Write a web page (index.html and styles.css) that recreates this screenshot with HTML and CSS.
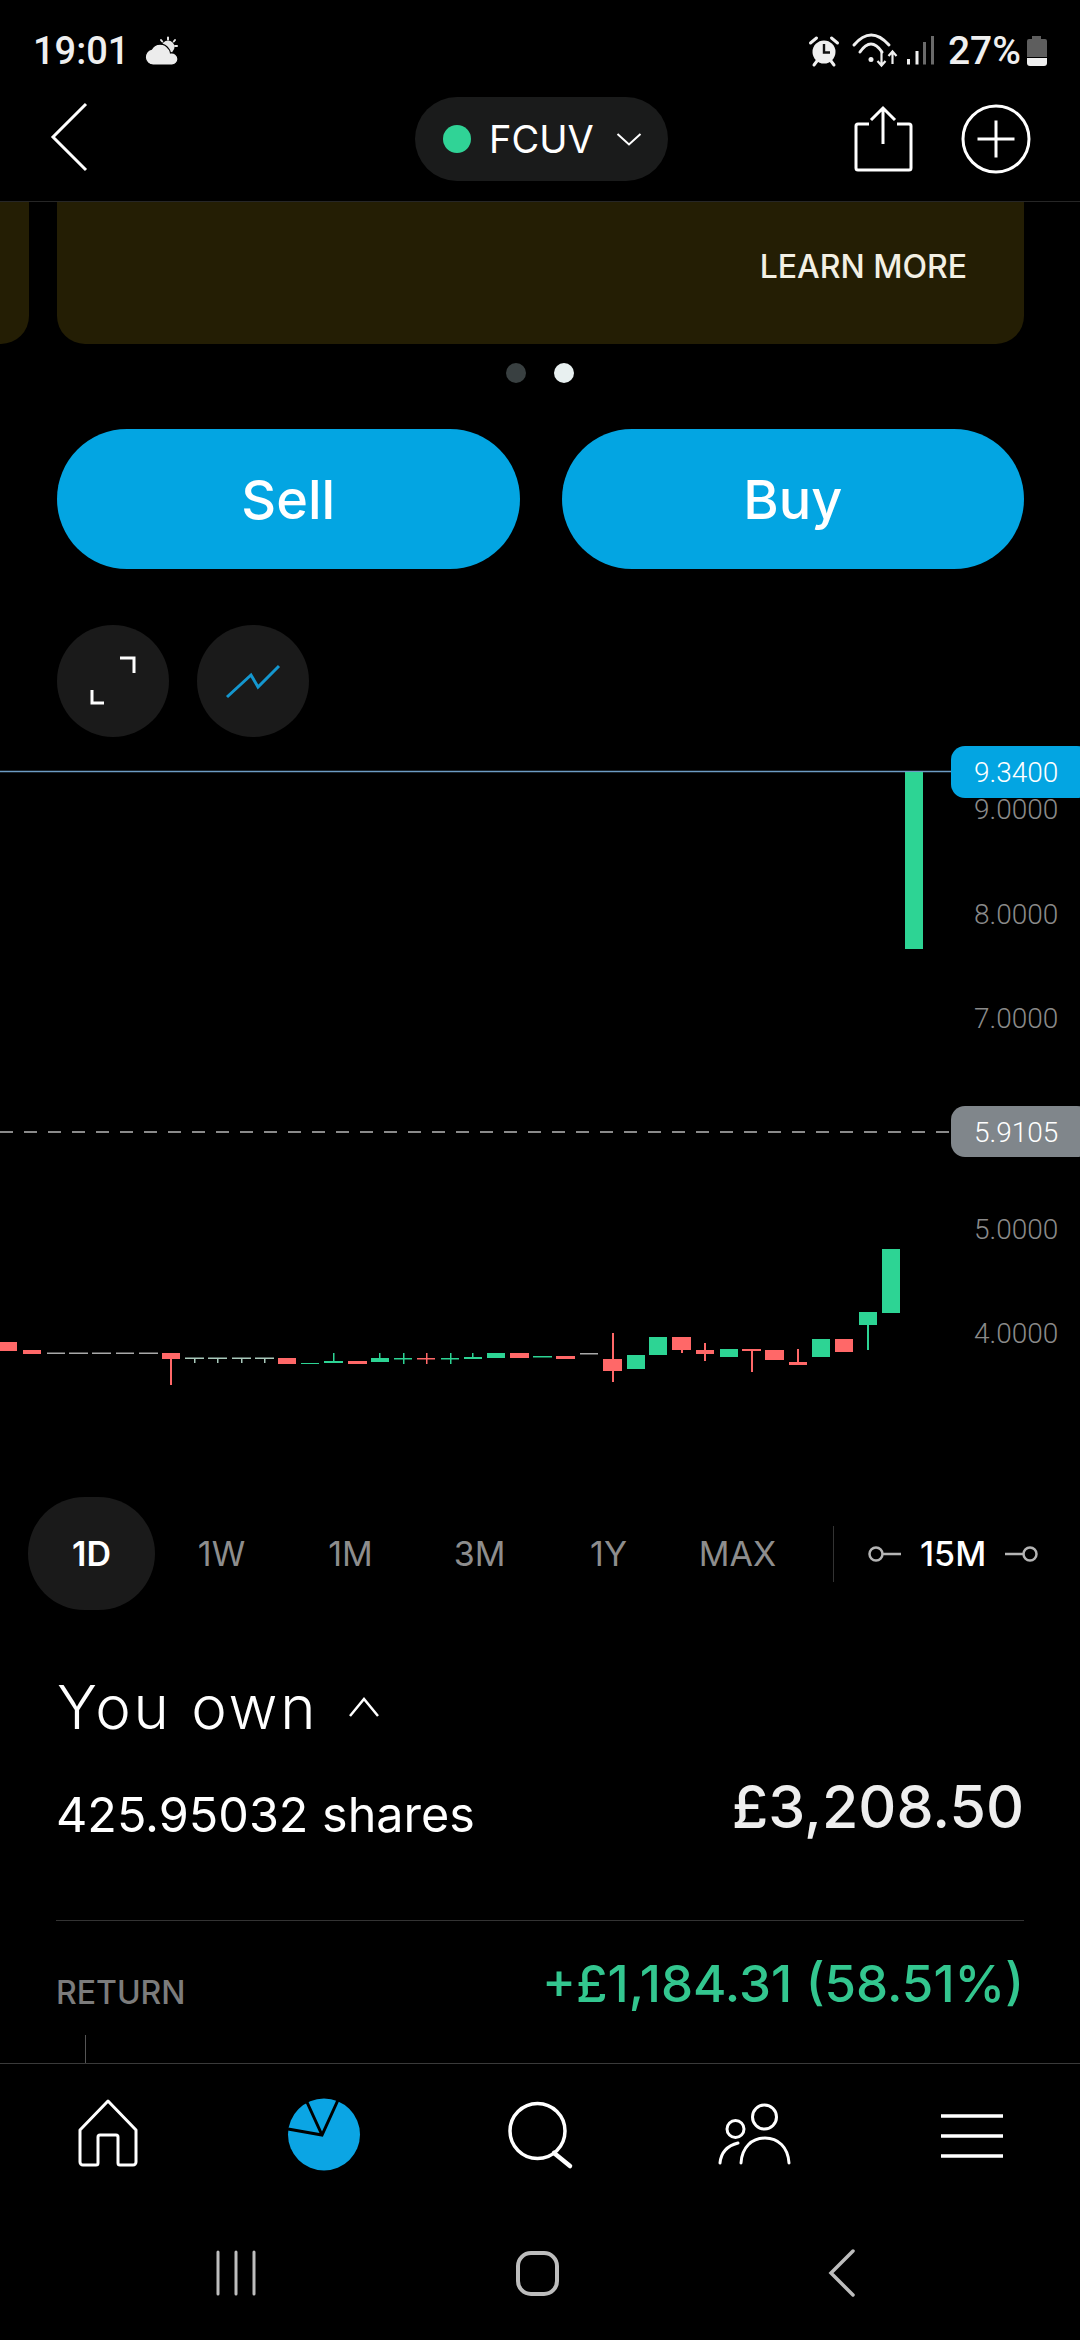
FILE: index.html
```html
<!DOCTYPE html>
<html lang="en">
<head>
<meta charset="utf-8">
<title>FCUV</title>
<link rel="stylesheet" href="styles.css">
</head>
<body>
<div class="phone">
  <div class="status-bar">
    <div class="status-left">
      <span class="clock">19:01</span>
      <svg class="ico-weather" viewBox="143 36 40 32" width="40" height="32">
        <circle cx="168" cy="48" r="6.5" fill="#e8e8e8"/>
        <g stroke="#e8e8e8" stroke-width="2" stroke-linecap="round">
          <path d="M168 38.5v2M161 41l1.2 1.5M175 41l-1.2 1.5M177 47h-2"/>
        </g>
        <path d="M153 66a8 8 0 0 1-1.500-15.800 10 10 0 0 1 17-.5 7 7 0 0 1 2 4.300 6.300 6.300 0 0 1 7.500 6 6.200 6.200 0 0 1-6 6z" fill="#ececec" stroke="#000" stroke-width="1.200"/>
      </svg>
    </div>
    <div class="status-right">
      <svg class="ico-tray" viewBox="808 34 128 36" width="128" height="36">
        <circle cx="824" cy="53" r="11.5" fill="#efefef"/>
        <path d="M824 45v8.500h6" fill="none" stroke="#111" stroke-width="2.400"/>
        <path d="M810.500 44l6-5M837.500 44l-6-5M814 66l3-4M834 66l-3-4" stroke="#efefef" stroke-width="3" stroke-linecap="round"/>
        <g fill="none" stroke="#efefef" stroke-width="3" stroke-linecap="round">
          <path d="M854 46Q871 26 889 46"/>
          <path d="M860 53Q871 37 882 53"/>
        </g>
        <circle cx="871" cy="60.500" r="2.500" fill="#efefef"/>
        <g fill="none" stroke="#efefef" stroke-width="2.200">
          <path d="M881.500 53v13M877.500 62l4 4.500 4-4.500"/>
          <path d="M892.500 65v-12M888.500 57l4-4.500 4 4.500"/>
        </g>
        <rect x="907" y="60" width="3" height="5.500" fill="#efefef"/>
        <rect x="915.500" y="52" width="3" height="13.500" fill="#efefef"/>
        <rect x="923" y="43" width="3" height="22.500" fill="#6a6a6a"/>
        <rect x="931" y="37" width="3" height="28.500" fill="#6a6a6a"/>
      </svg>
      <span class="battery-pct">27%</span>
      <svg class="ico-battery" viewBox="1027 36 22 32" width="22" height="32">
        <path d="M1033 37h9v3h4a2 2 0 0 1 2 2v16h-20V42a2 2 0 0 1 2-2h3z" fill="#5e5e5e"/>
        <path d="M1028 59h20v5a3 3 0 0 1-3 3h-14a3 3 0 0 1-3-3z" fill="#efefef"/>
      </svg>
    </div>
  </div>

  <header class="app-header">
    <svg class="ico-back" viewBox="40 97 60 104" width="60" height="104">
      <path d="M86 104L53 137l33 33" fill="none" stroke="#fff" stroke-width="3"/>
    </svg>
    <div class="ticker-pill">
      <span class="ticker-dot"></span>
      <span class="ticker-name">FCUV</span>
      <svg class="ico-chev" viewBox="0 0 26 14" width="26" height="14">
        <path d="M1.500 2l11.500 10.500L24.500 2" fill="none" stroke="#fff" stroke-width="2"/>
      </svg>
    </div>
    <div class="header-actions">
      <svg viewBox="850 97 66 104" width="66" height="104">
        <path d="M869 124h-11a2 2 0 0 0-2 2v42a2 2 0 0 0 2 2h51a2 2 0 0 0 2-2v-42a2 2 0 0 0-2-2h-12" fill="none" stroke="#fff" stroke-width="3"/>
        <path d="M883 144v-36M871 120l12-12 12 12" fill="none" stroke="#fff" stroke-width="3"/>
      </svg>
      <svg viewBox="960 97 72 104" width="72" height="104">
        <circle cx="996" cy="139" r="33" fill="none" stroke="#fff" stroke-width="3"/>
        <path d="M996 120.500v37M977.500 139h37" stroke="#fff" stroke-width="3"/>
      </svg>
    </div>
  </header>

  <main class="content">
    <div class="carousel">
      <div class="promo promo-prev"></div>
      <div class="promo promo-main"><span class="learn-more">LEARN MORE</span></div>
    </div>
    <div class="dots"><span class="dot"></span><span class="dot dot-on"></span></div>

    <div class="trade-row">
      <button class="trade-btn">Sell</button>
      <button class="trade-btn">Buy</button>
    </div>

    <div class="tool-row">
      <span class="tool-btn">
        <svg viewBox="0 0 112 112" width="112" height="112" fill="none" stroke="#fff" stroke-width="3">
          <path d="M63 33h14v15"/><path d="M35 65v13h12"/>
        </svg>
      </span>
      <span class="tool-btn">
        <svg viewBox="0 0 112 112" width="112" height="112" fill="none" stroke="#1497cf" stroke-width="3">
          <path d="M30 72L54 50 61 62 82 41"/>
        </svg>
      </span>
    </div>

    <div class="chart">
      <svg viewBox="0 737 1080 760" width="1080" height="760">
        <line x1="0" x2="951" y1="771.500" y2="771.500" stroke="#6d9cc4" stroke-width="1.500"/>
        <line x1="0" x2="951" y1="1132" y2="1132" stroke="#b8b8b8" stroke-width="1.500" stroke-dasharray="13 11"/>

        <g fill="#2dd494">
          <rect x="905" y="772" width="18" height="177"/>
          <rect x="882" y="1249" width="18" height="64"/>
          <rect x="859" y="1312" width="18" height="13"/>
          <rect x="867" y="1325" width="2" height="25"/>
          <rect x="812" y="1339" width="18" height="18"/>
          <rect x="720" y="1349" width="18" height="8"/>
          <rect x="649" y="1337" width="18" height="18"/>
          <rect x="627" y="1355" width="18" height="14"/>
          <rect x="533" y="1356" width="19" height="1.500"/>
          <rect x="487" y="1353" width="18" height="5"/>
          <rect x="464" y="1357" width="18" height="2"/>
          <rect x="472" y="1353" width="1.500" height="5"/>
          <rect x="371" y="1358" width="18" height="4"/>
          <rect x="379" y="1353" width="1.500" height="6"/>
          <rect x="324" y="1361" width="19" height="2"/>
          <rect x="333" y="1353" width="1.500" height="9"/>
          <rect x="301" y="1363" width="18" height="1"/>
          <rect x="394" y="1358" width="18" height="1.500"/>
          <rect x="403" y="1353" width="1.500" height="11"/>
          <rect x="441" y="1358" width="18" height="1.500"/>
          <rect x="450" y="1353" width="1.500" height="11"/>
        </g>
        <g fill="#a9c9bb">
          <rect x="185" y="1357.500" width="19" height="1.500"/><rect x="194" y="1358" width="1.500" height="5"/>
          <rect x="208" y="1357.500" width="19" height="1.500"/><rect x="217" y="1358" width="1.500" height="5"/>
          <rect x="232" y="1357.500" width="19" height="1.500"/><rect x="241" y="1358" width="1.500" height="5"/>
          <rect x="255" y="1357.500" width="19" height="1.500"/><rect x="264" y="1358" width="1.500" height="5"/>
        </g>
        <g fill="#a8a8a8">
          <rect x="47" y="1352.500" width="18" height="1.500"/>
          <rect x="69" y="1352.500" width="19" height="1.500"/>
          <rect x="92" y="1352.500" width="19" height="1.500"/>
          <rect x="116" y="1352.500" width="18" height="1.500"/>
          <rect x="139" y="1352.500" width="19" height="1.500"/>
          <rect x="580" y="1353" width="18" height="1.500"/>
        </g>
        <g fill="#ff6868">
          <rect x="0" y="1342" width="17" height="9"/>
          <rect x="23" y="1350" width="18" height="4"/>
          <rect x="162" y="1353" width="18" height="6"/>
          <rect x="170" y="1359" width="2" height="26"/>
          <rect x="278" y="1358" width="18" height="6"/>
          <rect x="348" y="1361" width="19" height="3"/>
          <rect x="417" y="1358" width="18" height="1.500"/>
          <rect x="426" y="1353" width="1.500" height="11"/>
          <rect x="510" y="1353" width="19" height="5"/>
          <rect x="556" y="1356" width="19" height="3"/>
          <rect x="603" y="1359" width="19" height="12"/>
          <rect x="612" y="1333" width="2" height="49"/>
          <rect x="672" y="1337" width="19" height="13"/>
          <rect x="681" y="1350" width="2" height="3"/>
          <rect x="696" y="1350" width="18" height="4"/>
          <rect x="704" y="1343" width="2" height="18"/>
          <rect x="742" y="1349" width="19" height="2"/>
          <rect x="751" y="1350" width="2" height="22"/>
          <rect x="765" y="1350" width="19" height="10"/>
          <rect x="789" y="1362" width="18" height="3"/>
          <rect x="797" y="1349" width="2" height="14"/>
          <rect x="835" y="1339" width="18" height="13"/>
        </g>

        <rect class="price-tag-live" x="951" y="746" width="140" height="52" rx="14"/>
        <rect class="price-tag-prev" x="951" y="1106" width="140" height="51" rx="14"/>
        <text class="axis axis-on" x="974" y="782">9.3400</text>
        <text class="axis" x="974" y="819">9.0000</text>
        <text class="axis" x="974" y="924">8.0000</text>
        <text class="axis" x="974" y="1028">7.0000</text>
        <text class="axis axis-on" x="974" y="1142">5.9105</text>
        <text class="axis" x="974" y="1239">5.0000</text>
        <text class="axis" x="974" y="1343">4.0000</text>
      </svg>
    </div>

    <div class="ranges">
      <span class="range range-on">1D</span>
      <span class="range">1W</span>
      <span class="range">1M</span>
      <span class="range">3M</span>
      <span class="range">1Y</span>
      <span class="range">MAX</span>
      <span class="range-sep"></span>
      <div class="interval">
        <svg viewBox="0 0 34 16" width="34" height="16" fill="none" stroke="#b4b4b4" stroke-width="2.500"><circle cx="8" cy="8" r="6.500"/><path d="M15 8h18"/></svg>
        <span class="interval-label">15M</span>
        <svg viewBox="0 0 34 16" width="34" height="16" fill="none" stroke="#b4b4b4" stroke-width="2.500"><path d="M1 8h18"/><circle cx="26" cy="8" r="6.500"/></svg>
      </div>
    </div>

    <section class="holding">
      <div class="own-title">
        <h2>You own</h2>
        <svg viewBox="0 0 30 20" width="30" height="20"><path d="M1 19L15 2l14 17" fill="none" stroke="#fff" stroke-width="2.500"/></svg>
      </div>
      <div class="own-row">
        <span class="shares">425.95032 shares</span>
        <span class="value">£3,208.50</span>
      </div>
      <div class="return-row">
        <span class="return-label">RETURN</span>
        <span class="return-value">+£1,184.31 (58.51%)</span>
      </div>
      <div class="timeline-stub"></div>
    </section>
  </main>

  <nav class="tab-bar">
    <svg viewBox="0 2064 216 126" width="216" height="126" fill="none" stroke="#fff" stroke-width="3" stroke-linejoin="round">
      <path d="M108 2101L136 2130v32a3 3 0 0 1-3 3h-13a2 2 0 0 1-2-2v-26a2 2 0 0 0-2-2h-16a2 2 0 0 0-2 2v26a2 2 0 0 1-2 2H83a3 3 0 0 1-3-3v-32z"/>
    </svg>
    <svg viewBox="216 2064 216 126" width="216" height="126">
      <circle cx="324" cy="2134.500" r="36" fill="#0ba5e4"/>
      <path d="M288 2129l34 6 16-35M306 2100l16 35" fill="none" stroke="#000" stroke-width="3"/>
    </svg>
    <svg viewBox="432 2064 216 126" width="216" height="126" fill="none" stroke="#fff" stroke-width="3.500">
      <circle cx="537.500" cy="2131" r="27.500"/>
      <path d="M554 2153l16 13" stroke-linecap="round" stroke-width="4.500"/>
    </svg>
    <svg viewBox="648 2064 216 126" width="216" height="126" fill="none" stroke="#fff" stroke-width="3">
      <circle cx="764.500" cy="2117" r="12"/>
      <circle cx="735.500" cy="2129" r="8.500"/>
      <path d="M741 2163c1-16 11-25 24-25s23 9 24 25" stroke-linecap="round"/>
      <path d="M720 2163c1-10 6-17 18-20" stroke-linecap="round"/>
    </svg>
    <svg viewBox="864 2064 216 126" width="216" height="126" stroke="#fff" stroke-width="3.500">
      <path d="M941 2116h62M941 2136h62M941 2156h62"/>
    </svg>
  </nav>
  <div class="system-nav">
    <svg viewBox="85 2223 302 100" width="302" height="100" stroke="#bdbdbd" stroke-width="3" stroke-linecap="round">
      <path d="M218 2252v42M236 2252v42M254 2252v42"/>
    </svg>
    <svg viewBox="387 2223 302 100" width="302" height="100" fill="none">
      <rect x="518" y="2253" width="39" height="41" rx="13" stroke="#bdbdbd" stroke-width="4"/>
    </svg>
    <svg viewBox="689 2223 302 100" width="302" height="100" fill="none">
      <path d="M853 2251l-22 22 22 22" stroke="#bdbdbd" stroke-width="3.500" stroke-linecap="round"/>
    </svg>
  </div>
</div>
</body>
</html>
```
FILE: styles.css
```css
* { box-sizing: border-box; }
html, body { margin: 0; padding: 0; background: #000; }
body { width: 1080px; height: 2340px; overflow: hidden; }
svg { display: block; }

.phone {
  width: 1080px;
  height: 2340px;
  display: flex;
  flex-direction: column;
  color: #fff;
  font-family: "Inter", "Liberation Sans", sans-serif;
  background: #000;
}

.status-bar {
  height: 97px;
  flex: none;
  display: flex;
  justify-content: space-between;
  align-items: flex-start;
  padding: 30px 32px 0 33px;
  font-family: "Roboto", sans-serif;
  font-weight: 500;
  color: #efefef;
}
.status-left, .status-right { display: flex; align-items: center; height: 42px; }
.clock { font-size: 38px; line-height: 42px; }
.ico-weather { margin-left: 14px; }
.battery-pct { font-size: 39px; line-height: 42px; margin-left: 12px; }
.ico-battery { margin-left: 5px; }

.app-header {
  height: 105px;
  flex: none;
  display: grid;
  grid-template-columns: 1fr auto 1fr;
  border-bottom: 1px solid #262626;
  padding-left: 40px;
}
.ticker-pill {
  height: 84px;
  width: 253px;
  border-radius: 42px;
  background: #1a1b1b;
  display: flex;
  align-items: center;
  padding-left: 28px;
  margin-right: 37px;
}
.ticker-dot { width: 28px; height: 28px; border-radius: 50%; background: #30d396; }
.ticker-name { font-size: 38px; margin-left: 18px; font-weight: 400; }
.ico-chev { margin-left: 22px; }
.header-actions { display: flex; justify-content: flex-end; padding-right: 48px; gap: 44px; }

.content { flex: 1; min-height: 0; overflow: hidden; }

.carousel { display: flex; gap: 28px; height: 142px; }
.promo { background: #241e04; border-radius: 0 0 28px 28px; }
.promo-prev { width: 29px; border-bottom-left-radius: 0; }
.promo-main {
  width: 967px;
  display: flex;
  justify-content: flex-end;
  padding: 45px 57px 0 0;
}
.learn-more { font-size: 32px; line-height: 40px; font-weight: 500; color: #f3f0e4; }

.dots { display: flex; justify-content: center; gap: 28px; margin-top: 19px; }
.dot { width: 20px; height: 20px; border-radius: 50%; background: #394041; }
.dot-on { background: #e8f0f0; }

.trade-row { display: flex; gap: 42px; padding: 0 56px 0 57px; margin-top: 46px; }
.trade-btn {
  flex: 1;
  height: 140px;
  border: 0;
  border-radius: 70px;
  background: #03a5e2;
  color: #fff;
  font-family: inherit;
  font-size: 54px;
  font-weight: 500;
  padding: 0;
}

.tool-row { display: flex; gap: 28px; padding-left: 57px; margin-top: 56px; }
.tool-btn { width: 112px; height: 112px; border-radius: 50%; background: #1a1a1a; }

.chart { height: 760px; }
.price-tag-live { fill: #03a5e2; }
.price-tag-prev { fill: #80868b; }
.axis { font-family: "Roboto", sans-serif; font-weight: 300; font-size: 28px; fill: #8a8a8a; }
.axis-on { fill: #fff; }

.ranges { height: 113px; display: flex; align-items: center; padding-left: 28px; }
.range {
  width: 129px;
  height: 113px;
  border-radius: 57px;
  display: flex;
  align-items: center;
  justify-content: center;
  font-size: 34px;
  color: #8d8d8d;
  flex: none;
}
.range-on { background: #1a1a1a; color: #fff; font-weight: 600; width: 127px; margin-right: 2px; }
.range-sep { width: 1px; height: 56px; background: #333; margin-left: 31px; }
.interval { display: flex; align-items: center; margin-left: 34px; gap: 18px; }
.interval-label { font-size: 34px; font-weight: 500; }

.holding { padding: 0 56px 0 56px; }
.own-title { display: flex; align-items: center; gap: 31px; margin-top: 67px; padding-left: 1px; }
.own-title h2 { margin: 0; font-size: 60px; line-height: 60px; font-weight: 300; letter-spacing: 2.8px; }
.own-row {
  display: flex;
  justify-content: space-between;
  align-items: flex-start;
  margin-top: 35px;
  height: 148px;
}
.shares { font-size: 48.5px; line-height: 60px; margin-top: 13px; font-weight: 400; }
.value { font-size: 59px; line-height: 70px; font-weight: 500; color: #eee; }
.return-row {
  display: flex;
  justify-content: space-between;
  align-items: flex-start;
  border-top: 1px solid #333;
  padding-top: 33px;
}
.return-label { font-size: 32px; line-height: 40px; margin-top: 19px; color: #7c7c7c; font-weight: 500; }
.return-value { font-size: 51px; line-height: 60px; color: #33c68f; font-weight: 500; }
.timeline-stub { width: 1px; height: 40px; background: #555; margin: 21px 0 0 29px; }

.tab-bar {
  height: 160px;
  flex: none;
  display: flex;
  border-top: 1px solid #3a3a3a;
}
.system-nav {
  height: 117px;
  flex: none;
  display: flex;
  padding-left: 85px;
  align-items: flex-start;
}
```
